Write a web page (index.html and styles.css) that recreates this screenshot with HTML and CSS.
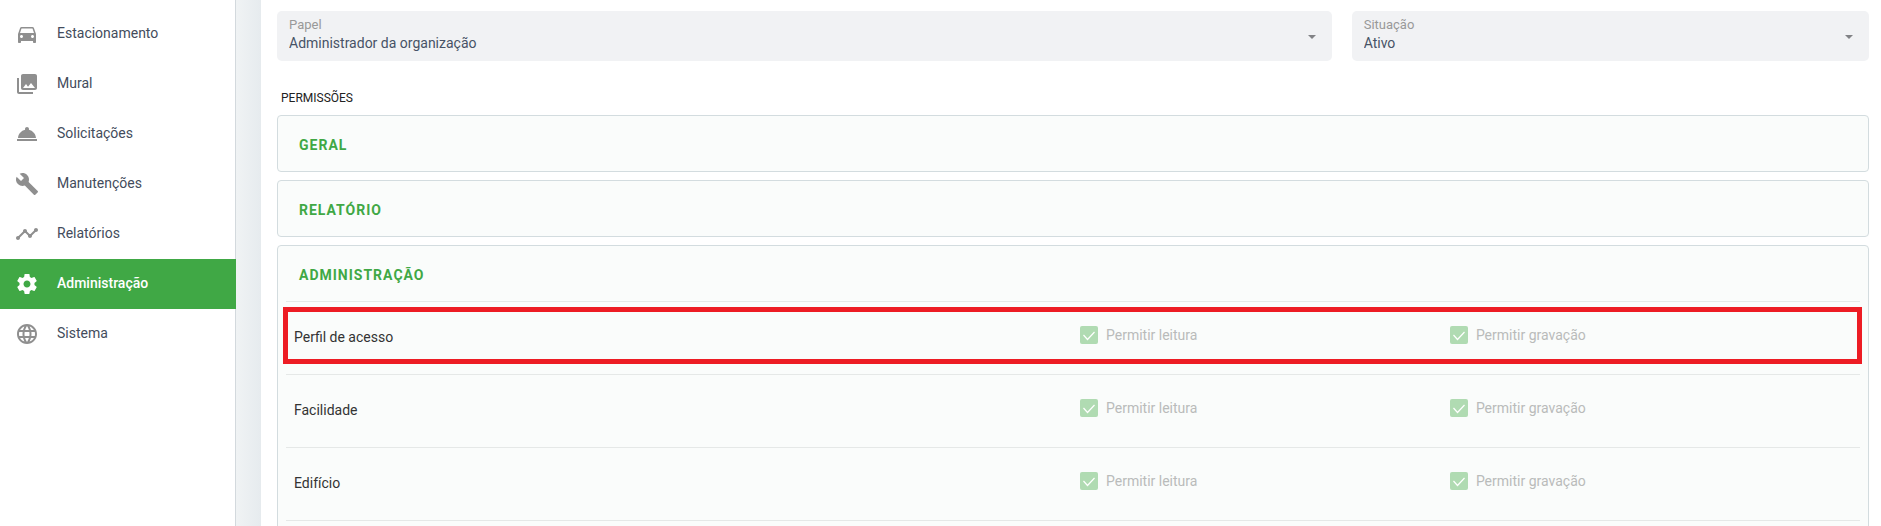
FILE: index.html
```html
<!DOCTYPE html>
<html lang="pt-BR">
<head>
    <meta charset="UTF-8">
    <meta name="viewport" content="width=device-width, initial-scale=1.0">
    <title>Perfil de acesso</title>
    <link rel="stylesheet" href="styles.css">
</head>
<body>
    <div class="app">
        <nav class="sidebar">
            <a href="#" class="menu-item">
                <svg viewBox="0 0 24 24"><path d="M18.92 6.01C18.72 5.42 18.16 5 17.5 5h-11c-.66 0-1.21.42-1.42 1.01L3 12v8c0 .55.45 1 1 1h1c.55 0 1-.45 1-1v-1h12v1c0 .55.45 1 1 1h1c.55 0 1-.45 1-1v-8l-2.08-5.99zM6.5 16c-.83 0-1.5-.67-1.5-1.5S5.67 13 6.5 13s1.5.67 1.5 1.5S7.33 16 6.5 16zm11 0c-.83 0-1.5-.67-1.5-1.5s.67-1.5 1.5-1.5 1.5.67 1.5 1.5-.67 1.5-1.5 1.5zM5 11l1.5-4.5h11L19 11H5z"/></svg>
                <span>Estacionamento</span>
            </a>
            <a href="#" class="menu-item">
                <svg viewBox="0 0 24 24"><path d="M22 16V4c0-1.100-.9-2-2-2H8c-1.100 0-2 .9-2 2v12c0 1.100.9 2 2 2h12c1.100 0 2-.9 2-2zm-11-4l2.030 2.710L16 11l4 5H8l3-4zM2 6v14c0 1.100.9 2 2 2h14v-2H4V6H2z"/></svg>
                <span>Mural</span>
            </a>
            <a href="#" class="menu-item">
                <svg viewBox="0 0 24 24"><path d="M2 17h20v2H2zm11.840-9.210c.1-.24.160-.51.160-.79 0-1.100-.9-2-2-2s-2 .9-2 2c0 .28.060.55.160.79C6.250 8.600 3.270 11.930 3 16h18c-.27-4.070-3.250-7.400-7.160-8.210z"/></svg>
                <span>Solicitações</span>
            </a>
            <a href="#" class="menu-item">
                <svg viewBox="0 0 24 24"><path d="M22.700 19l-9.100-9.100c.9-2.300.4-5-1.500-6.900-2-2-5-2.400-7.400-1.300L9 6 6 9 1.600 4.700C.4 7.100.9 10.100 2.900 12.100c1.900 1.900 4.600 2.400 6.900 1.500l9.100 9.100c.4.4 1 .4 1.400 0l2.300-2.300c.5-.4.5-1.100.1-1.400z"/></svg>
                <span>Manutenções</span>
            </a>
            <a href="#" class="menu-item">
                <svg viewBox="0 0 24 24"><path d="M23 8c0 1.100-.9 2-2 2-.18 0-.35-.02-.51-.07l-3.560 3.550c.05.16.07.34.07.52 0 1.100-.9 2-2 2s-2-.9-2-2c0-.18.02-.36.07-.52l-2.550-2.550c-.16.05-.34.07-.52.07s-.36-.02-.52-.07l-4.550 4.560c.05.16.07.33.07.51 0 1.100-.9 2-2 2s-2-.9-2-2 .9-2 2-2c.18 0 .35.02.51.07l4.560-4.550C8.020 9.360 8 9.180 8 9c0-1.100.9-2 2-2s2 .9 2 2c0 .18-.02.36-.07.52l2.550 2.550c.16-.05.34-.07.52-.07s.36.02.52.07l3.550-3.560C19.020 8.350 19 8.180 19 8c0-1.100.9-2 2-2s2 .9 2 2z"/></svg>
                <span>Relatórios</span>
            </a>
            <a href="#" class="menu-item active">
                <svg viewBox="0 0 24 24"><path d="M19.430 12.980c.04-.32.07-.64.07-.98s-.03-.66-.07-.98l2.110-1.650c.19-.15.24-.42.12-.64l-2-3.460c-.12-.22-.39-.3-.61-.22l-2.490 1c-.52-.4-1.080-.73-1.690-.98l-.38-2.650C14.460 2.180 14.250 2 14 2h-4c-.25 0-.46.18-.49.42l-.38 2.650c-.61.25-1.170.59-1.690.98l-2.490-1c-.23-.09-.49 0-.61.22l-2 3.460c-.13.22-.07.49.12.64l2.110 1.650c-.04.32-.07.65-.07.98s.03.66.07.98l-2.110 1.650c-.19.15-.24.42-.12.64l2 3.460c.12.22.39.3.61.22l2.490-1c.52.4 1.080.73 1.690.98l.38 2.650c.03.24.24.42.49.42h4c.25 0 .46-.18.49-.42l.38-2.650c.61-.25 1.170-.59 1.690-.98l2.490 1c.23.09.49 0 .61-.22l2-3.460c.12-.22.07-.49-.12-.64l-2.110-1.650zM12 15.500c-1.930 0-3.500-1.570-3.500-3.500s1.570-3.500 3.500-3.500 3.500 1.570 3.500 3.500-1.570 3.500-3.500 3.500z"/></svg>
                <span>Administração</span>
            </a>
            <a href="#" class="menu-item">
                <svg viewBox="0 0 24 24"><path d="M11.990 2C6.470 2 2 6.480 2 12s4.470 10 9.990 10C17.520 22 22 17.520 22 12S17.520 2 11.990 2zm6.930 6h-2.950c-.32-1.250-.78-2.450-1.380-3.560 1.840.63 3.370 1.910 4.330 3.560zM12 4.040c.83 1.200 1.480 2.530 1.910 3.960h-3.820c.43-1.430 1.080-2.760 1.910-3.960zM4.260 14C4.100 13.360 4 12.690 4 12s.1-1.360.26-2h3.380c-.08.66-.14 1.320-.14 2s.06 1.340.14 2H4.260zm.82 2h2.950c.32 1.250.78 2.450 1.380 3.560-1.840-.63-3.370-1.900-4.330-3.560zm2.950-8H5.080c.96-1.660 2.490-2.930 4.330-3.560C8.810 5.550 8.350 6.750 8.030 8zM12 19.960c-.83-1.200-1.480-2.530-1.910-3.960h3.820c-.43 1.430-1.080 2.760-1.910 3.960zM14.340 14H9.660c-.09-.66-.16-1.320-.16-2s.07-1.350.16-2h4.680c.09.65.16 1.320.16 2s-.07 1.340-.16 2zm.25 5.560c.6-1.110 1.060-2.310 1.380-3.560h2.950c-.96 1.650-2.490 2.930-4.330 3.560zM16.360 14c.08-.66.14-1.320.14-2s-.06-1.340-.14-2h3.380c.16.64.26 1.310.26 2s-.1 1.360-.26 2h-3.380z"/></svg>
                <span>Sistema</span>
            </a>
        </nav>

        <main class="content">
            <div class="fields">
                <div class="field field-role">
                    <label for="papel">Papel</label>
                    <select id="papel">
                        <option>Administrador da organização</option>
                    </select>
                </div>
                <div class="field field-status">
                    <label for="situacao">Situação</label>
                    <select id="situacao">
                        <option>Ativo</option>
                    </select>
                </div>
            </div>

            <h2 class="section-title">PERMISSÕES</h2>

            <section class="panel">
                <h3>GERAL</h3>
            </section>
            <section class="panel">
                <h3>RELATÓRIO</h3>
            </section>
            <section class="panel panel-open">
                <h3>ADMINISTRAÇÃO</h3>
                <table class="permissions">
                    <tr class="highlight">
                        <td class="name">Perfil de acesso</td>
                        <td class="read"><label><input type="checkbox" checked disabled>Permitir leitura</label></td>
                        <td><label><input type="checkbox" checked disabled>Permitir gravação</label></td>
                    </tr>
                    <tr>
                        <td class="name">Facilidade</td>
                        <td class="read"><label><input type="checkbox" checked disabled>Permitir leitura</label></td>
                        <td><label><input type="checkbox" checked disabled>Permitir gravação</label></td>
                    </tr>
                    <tr>
                        <td class="name">Edifício</td>
                        <td class="read"><label><input type="checkbox" checked disabled>Permitir leitura</label></td>
                        <td><label><input type="checkbox" checked disabled>Permitir gravação</label></td>
                    </tr>
                </table>
            </section>
        </main>
    </div>
</body>
</html>
```
FILE: styles.css
```css
* {
    box-sizing: border-box;
}
body {
    margin: 0;
    font-family: Roboto, Arial, sans-serif;
    font-size: 14px;
    color: #333;
    background-color: #fff;
}
.app {
    display: flex;
    height: 100vh;
    overflow: hidden;
}

/* Menu lateral */
.sidebar {
    flex: 0 0 236px;
    padding-top: 9px;
    background: linear-gradient(to left, #d3d9dd 1px, #fff 1px);
}
.menu-item {
    display: flex;
    align-items: center;
    gap: 18px;
    height: 50px;
    padding-left: 15px;
    color: #434c5c;
    text-decoration: none;
}
.menu-item svg {
    width: 24px;
    height: 24px;
    fill: #8f8f8f;
}
.menu-item span {
    padding-bottom: 2px;
}
.menu-item.active {
    background-color: #40a845;
    color: #fff;
    font-weight: 500;
}
.menu-item.active svg {
    fill: #fff;
}

/* Conteúdo */
.content {
    flex: 1;
    padding: 11px 12px 0 41px;
    background: linear-gradient(to right, #f0f3f4, #e6ebee) no-repeat 0 0 / 25px 100%;
}
.fields {
    display: grid;
    grid-template-columns: repeat(12, 1fr);
    gap: 20px;
}
.field {
    padding: 5px 12px;
    border-radius: 5px;
    background: #f1f2f4 url("data:image/svg+xml,%3Csvg xmlns='http://www.w3.org/2000/svg' width='8' height='6'%3E%3Cpath d='M0 2h8L4 6z' fill='%23818285'/%3E%3C/svg%3E") no-repeat right 16px center;
}
.field-role {
    grid-column: span 8;
}
.field-status {
    grid-column: span 4;
}
.field label {
    display: block;
    font-size: 13px;
    line-height: 18px;
    color: #999;
}
.field select {
    display: block;
    width: 100%;
    height: 22px;
    padding: 0 0 4px;
    border: none;
    appearance: none;
    background: none;
    font: inherit;
    color: #475266;
}
.section-title {
    margin: 28px 4px 8px;
    font-size: 12px;
    font-weight: 400;
    line-height: 18px;
    color: #222;
}
.panel {
    margin-bottom: 8px;
    padding: 0 8px;
    border: 1px solid #d3dcdf;
    border-radius: 4px;
    background-color: #fafcfb;
}
.panel-open {
    padding-bottom: 16px;
}
.panel h3 {
    margin: 0;
    padding: 3px 13px 0;
    font-size: 14px;
    font-weight: 700;
    line-height: 52px;
    letter-spacing: 1px;
    color: #40a845;
}
.permissions {
    width: 100%;
    table-layout: fixed;
    border-collapse: separate;
    border-spacing: 0;
    border-bottom: 1px solid #e5e8e7;
}
.permissions tr {
    position: relative;
}
.permissions td {
    height: 73px;
    padding: 0 7px 6px;
    border-top: 1px solid #e5e8e7;
}
.permissions .name {
    width: 50%;
    padding: 0 8px 2px;
}
.permissions .read {
    width: 23.5%;
}
.permissions label {
    display: flex;
    align-items: center;
    gap: 8px;
    color: #b9bbba;
}
.permissions input {
    width: 18px;
    height: 18px;
    margin: 0;
    border-radius: 2px;
    appearance: none;
    background: #b0dbb2 url("data:image/svg+xml,%3Csvg xmlns='http://www.w3.org/2000/svg' width='18' height='18'%3E%3Cpath d='M3.500 9l4 4.500 7-7.500' fill='none' stroke='%23fff' stroke-width='1.200'/%3E%3C/svg%3E");
}
.highlight .name::after {
    content: "";
    position: absolute;
    top: 6px;
    bottom: 10px;
    left: -3px;
    right: -2px;
    border: 5px solid #ed1c24;
    pointer-events: none;
}
```
